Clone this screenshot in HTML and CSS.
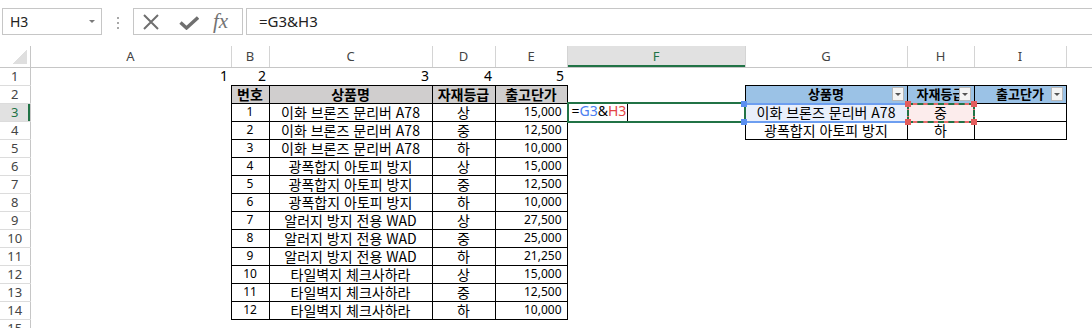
FILE: index.html
```html
<!DOCTYPE html>
<html lang="ko">
<head>
  <meta charset="UTF-8">
  <title>출고단가 - Excel</title>
  <link rel="stylesheet" href="styles.css">
</head>
<body>
  <div class="formula-bar">
    <div class="name-box">H3<span class="caret"></span></div>
    <div class="grip"><i></i><i></i><i></i></div>
    <div class="fx-buttons">
      <svg width="18" height="16" viewBox="0 0 18 16"><path d="M2 1 L16 15 M16 1 L2 15" stroke="#6f6f6f" stroke-width="2" fill="none"/></svg>
      <svg class="btn-ok" width="20" height="14" viewBox="0 0 20 14"><path d="M1.5 6.5 L7.5 12 L19 1.5" stroke="#6f6f6f" stroke-width="3.4" fill="none"/></svg>
      <span class="fx">fx</span>
    </div>
    <div class="formula-input">=G3&amp;H3</div>
  </div>

  <table class="sheet">
    <colgroup>
      <col class="w-rh"><col class="w-a"><col class="w-b"><col class="w-c"><col class="w-d"><col class="w-e"><col class="w-f"><col class="w-g"><col class="w-h"><col class="w-i"><col class="w-j">
    </colgroup>
    <tr class="heads">
      <th class="corner"></th><th>A</th><th>B</th><th>C</th><th>D</th><th>E</th><th class="on">F</th><th>G</th><th>H</th><th>I</th><th></th>
    </tr>
    <tr>
      <th class="rh">1</th><td class="n1">1</td><td class="n1">2</td><td class="n1">3</td><td class="n1">4</td><td class="n1">5</td><td></td><td></td><td></td><td></td><td></td>
    </tr>
    <tr>
      <th class="rh">2</th><td></td>
      <td class="b hd">번호</td><td class="b hd">상품명</td><td class="b hd">자재등급</td><td class="b hd">출고단가</td>
      <td></td>
      <td class="b thd">상품명<span class="filter"></span></td>
      <td class="b thd">자재등급<span class="filter"></span></td>
      <td class="b thd">출고단가<span class="filter"></span></td>
      <td></td>
    </tr>
    <tr>
      <th class="rh on">3</th><td></td>
      <td class="b c nm">1</td><td class="b c">이화 브론즈 문리버 A78</td><td class="b c">상</td><td class="b r nm">15,000</td>
      <td class="edit">=<span class="ref-g">G3</span>&amp;<span class="ref-h">H3</span><span class="cursor"></span><span class="sel"></span></td>
      <td class="b c ref blue-cell">이화 브론즈 문리버 A78<span class="hl blue"><i class="tl"></i><i class="bl"></i></span></td>
      <td class="b c ref red-cell">중<span class="hl red"><span class="ants"></span><i class="tl"></i><i class="tr"></i><i class="bl"></i><i class="br"></i></span></td>
      <td class="b"></td>
      <td></td>
    </tr>
    <tr>
      <th class="rh">4</th><td></td>
      <td class="b c nm">2</td><td class="b c">이화 브론즈 문리버 A78</td><td class="b c">중</td><td class="b r nm">12,500</td>
      <td></td>
      <td class="b c">광폭합지 아토피 방지</td><td class="b c">하</td><td class="b"></td>
      <td></td>
    </tr>
    <tr>
      <th class="rh">5</th><td></td>
      <td class="b c nm">3</td><td class="b c">이화 브론즈 문리버 A78</td><td class="b c">하</td><td class="b r nm">10,000</td>
      <td></td><td></td><td></td><td></td><td></td>
    </tr>
    <tr>
      <th class="rh">6</th><td></td>
      <td class="b c nm">4</td><td class="b c">광폭합지 아토피 방지</td><td class="b c">상</td><td class="b r nm">15,000</td>
      <td></td><td></td><td></td><td></td><td></td>
    </tr>
    <tr>
      <th class="rh">7</th><td></td>
      <td class="b c nm">5</td><td class="b c">광폭합지 아토피 방지</td><td class="b c">중</td><td class="b r nm">12,500</td>
      <td></td><td></td><td></td><td></td><td></td>
    </tr>
    <tr>
      <th class="rh">8</th><td></td>
      <td class="b c nm">6</td><td class="b c">광폭합지 아토피 방지</td><td class="b c">하</td><td class="b r nm">10,000</td>
      <td></td><td></td><td></td><td></td><td></td>
    </tr>
    <tr>
      <th class="rh">9</th><td></td>
      <td class="b c nm">7</td><td class="b c">알러지 방지 전용 WAD</td><td class="b c">상</td><td class="b r nm">27,500</td>
      <td></td><td></td><td></td><td></td><td></td>
    </tr>
    <tr>
      <th class="rh">10</th><td></td>
      <td class="b c nm">8</td><td class="b c">알러지 방지 전용 WAD</td><td class="b c">중</td><td class="b r nm">25,000</td>
      <td></td><td></td><td></td><td></td><td></td>
    </tr>
    <tr>
      <th class="rh">11</th><td></td>
      <td class="b c nm">9</td><td class="b c">알러지 방지 전용 WAD</td><td class="b c">하</td><td class="b r nm">21,250</td>
      <td></td><td></td><td></td><td></td><td></td>
    </tr>
    <tr>
      <th class="rh">12</th><td></td>
      <td class="b c nm">10</td><td class="b c">타일벽지 체크사하라</td><td class="b c">상</td><td class="b r nm">15,000</td>
      <td></td><td></td><td></td><td></td><td></td>
    </tr>
    <tr>
      <th class="rh">13</th><td></td>
      <td class="b c nm">11</td><td class="b c">타일벽지 체크사하라</td><td class="b c">중</td><td class="b r nm">12,500</td>
      <td></td><td></td><td></td><td></td><td></td>
    </tr>
    <tr>
      <th class="rh">14</th><td></td>
      <td class="b c nm">12</td><td class="b c">타일벽지 체크사하라</td><td class="b c">하</td><td class="b r nm">10,000</td>
      <td></td><td></td><td></td><td></td><td></td>
    </tr>
    <tr>
      <th class="rh">15</th><td></td><td></td><td></td><td></td><td></td><td></td><td></td><td></td><td></td><td></td>
    </tr>
  </table>
</body>
</html>
```

FILE: styles.css
```css
body {
  margin: 0;
  background: #fff;
  overflow: hidden;
  font-family: "Noto Sans", "Noto Sans CJK KR", sans-serif;
  color: #222;
}

/* formula bar */
.formula-bar {
  display: flex;
  align-items: flex-start;
  height: 46px;
  padding-top: 8px;
  box-sizing: border-box;
}
.name-box {
  display: flex;
  align-items: center;
  justify-content: space-between;
  width: 100px;
  height: 27px;
  margin-left: 2px;
  padding: 0 6px 0 7px;
  box-sizing: border-box;
  border: 1px solid #c6c6c6;
  font-size: 14px;
}
.caret {
  border-left: 3px solid transparent;
  border-right: 3px solid transparent;
  border-top: 3px solid #7a7a7a;
}
.grip {
  display: flex;
  flex-direction: column;
  align-items: center;
  gap: 3px;
  width: 31px;
  height: 27px;
  padding-top: 9px;
  box-sizing: border-box;
}
.grip i {
  width: 2px;
  height: 2px;
  background: #a8a8a8;
}
.fx-buttons {
  display: flex;
  align-items: center;
  width: 110px;
  height: 27px;
  padding-left: 8px;
  box-sizing: border-box;
  border: 1px solid #c6c6c6;
}
.fx-buttons svg {
  display: block;
}
.btn-ok {
  margin-left: 19px;
  margin-top: 2px;
}
.fx {
  margin-left: 14px;
  font-family: "Liberation Serif", serif;
  font-style: italic;
  font-size: 21px;
  line-height: 25px;
  color: #737373;
}
.formula-input {
  flex: 1;
  height: 27px;
  margin-left: 3px;
  padding-left: 12px;
  box-sizing: border-box;
  border: 1px solid #c6c6c6;
  border-right: 0;
  font-size: 15px;
  line-height: 25px;
}

/* grid */
.sheet {
  border-collapse: collapse;
  table-layout: fixed;
  width: 1106px;
}
.w-rh { width: 30px; }
.w-a { width: 201px; }
.w-b { width: 38px; }
.w-c { width: 163px; }
.w-d { width: 63px; }
.w-e { width: 72px; }
.w-f { width: 178px; }
.w-g { width: 162px; }
.w-h { width: 67px; }
.w-i { width: 92px; }
.w-j { width: 40px; }

.sheet tr {
  height: 18px;
}
.sheet tr.heads {
  height: 21px;
}
.sheet th,
.sheet td {
  padding: 0 3px;
  white-space: nowrap;
  overflow: hidden;
  line-height: 16px;
}
.sheet td {
  font-family: "Noto Sans CJK KR", sans-serif;
  font-size: 14px;
  color: #000;
}
.heads th {
  font-size: 13px;
  font-weight: 400;
  color: #444;
  border-right: 1px solid #d4d4d4;
  border-bottom: 1px solid #c6c6c6;
}
.heads th.on {
  background: #e1e1e1;
  color: #217346;
  box-shadow: inset 0 -2px 0 #217346;
}
.heads th.corner {
  border-right-color: #c6c6c6;
  background: linear-gradient(135deg, transparent 50%, #dfdfdf 50%) no-repeat right 3px bottom 3px / 14px 15px;
}
.rh {
  font-size: 13px;
  font-weight: 400;
  color: #444;
  border-right: 1px solid #c6c6c6;
  border-bottom: 1px solid #dcdcdc;
}
.rh.on {
  background: #e1e1e1;
  color: #217346;
  box-shadow: inset -2px 0 0 #217346;
}

.n1 {
  text-align: right;
  font-family: "Noto Sans", sans-serif !important;
  padding-right: 3px;
}
.b {
  border: 1px solid #000;
}
.c {
  text-align: center;
}
.r {
  text-align: right;
  padding-right: 5px !important;
}
.nm {
  font-family: "Noto Sans", sans-serif !important;
  font-size: 12px !important;
}
.hd {
  background: #d0cece;
  font-weight: 700;
  text-align: center;
}
.thd {
  position: relative;
  background: #9bc2e6;
  font-weight: 700;
  font-size: 13px !important;
  text-align: center;
}
.filter {
  position: absolute;
  top: 1px;
  right: 3px;
  width: 12px;
  height: 14px;
  box-sizing: border-box;
  border: 1px solid #b8b8b8;
  background: #f4f4f4;
}
.filter::after {
  content: "";
  position: absolute;
  left: 2px;
  top: 5px;
  border-left: 3px solid transparent;
  border-right: 3px solid transparent;
  border-top: 3px solid #555;
}

/* formula being typed in F3 */
.edit {
  position: relative;
  overflow: visible !important;
  padding-left: 4px !important;
  font-family: "Noto Sans", sans-serif !important;
}
.ref-g { color: #4a7ef0; }
.ref-h { color: #e34545; }
.cursor {
  display: inline-block;
  width: 1px;
  height: 17px;
  margin-left: 1px;
  background: #000;
  vertical-align: middle;
}
.sel {
  position: absolute;
  top: -1px;
  left: -1px;
  right: -1px;
  bottom: -2px;
  border: 2px solid #217346;
}

/* referenced cells */
.ref {
  position: relative;
  overflow: visible !important;
}
.blue-cell { background: #e9effb; }
.red-cell { background: #fcecec; }
.hl {
  position: absolute;
  top: -1px;
  left: -1px;
  right: -1px;
  bottom: -2px;
}
.hl.blue {
  border-top: 2px solid #6d9ef0;
  border-bottom: 2px solid #6d9ef0;
}
.hl.red {
  border: 2px solid #e86a6a;
}
.ants {
  position: absolute;
  top: -2px;
  left: -2px;
  right: -2px;
  bottom: -2px;
  border: 2px dashed #217346;
}
.hl i {
  position: absolute;
  width: 6px;
  height: 6px;
}
.hl.blue i { background: #5b8ff0; }
.hl.red i { background: #e35d5d; }
.hl .tl { top: -4px; left: -4px; }
.hl .tr { top: -4px; right: -4px; }
.hl .bl { bottom: -4px; left: -4px; }
.hl .br { bottom: -4px; right: -4px; }
```
